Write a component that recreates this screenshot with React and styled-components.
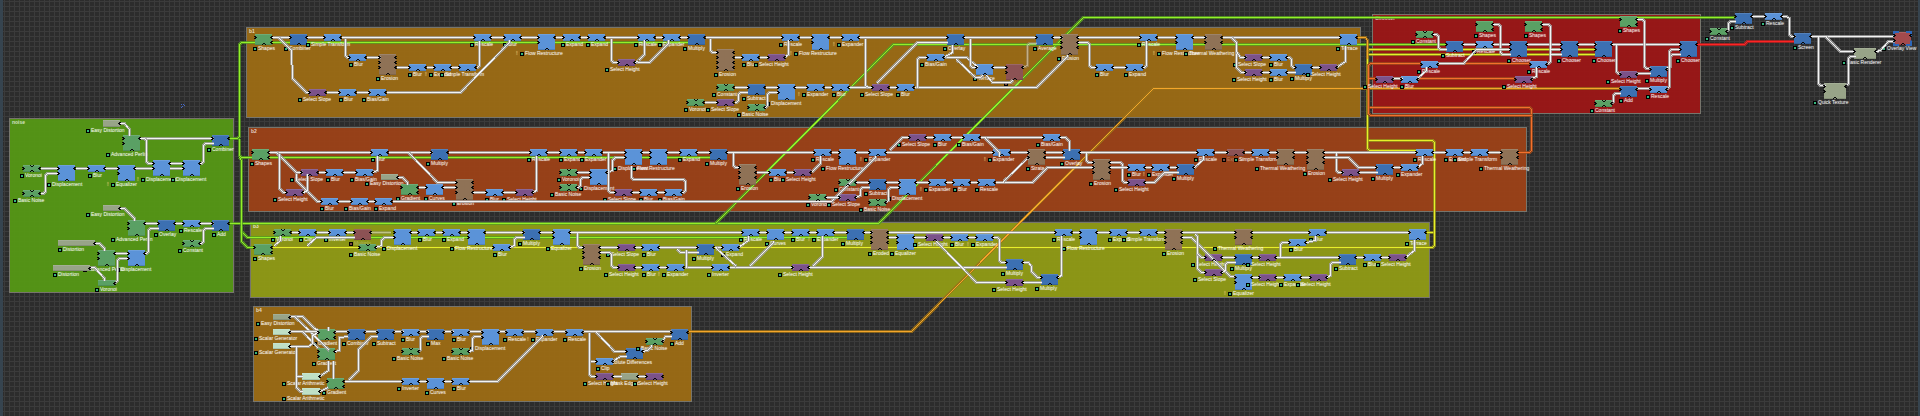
import React from 'react';
import styled, { createGlobalStyle } from 'styled-components';

const GlobalStyle = createGlobalStyle`
  body { margin: 0; background: #2c2c2c; }
`;

// One screen pixel shows three graph units at this zoom level.
const UNITS = 3;
const toPx = (origin, v) => origin + Math.round(v / UNITS);
const toLine = (origin, v) => origin + Math.floor(v / UNITS) + 0.5;

const KINDS = {
  G: '#5aa064',
  B: '#5b93d8',
  D: '#3c70b2',
  W: '#8f7256',
  P: '#7b528a',
  Y: '#98a488',
  M: '#bfe0c6',
  R: '#8c5254',
  V: '#a44a4c',
};

const Canvas = styled.main`
  position: relative;
  min-height: 100vh;
  overflow: hidden;
  background-color: #2c2c2c;
  background-image:
    linear-gradient(to right, #3b3b3b 1px, transparent 1px),
    linear-gradient(to bottom, #3b3b3b 1px, transparent 1px);
  background-size: 5px 5px;
  background-position: 4px 1px;
  font-family: 'Liberation Sans', Arial, sans-serif;
`;

const EdgeRail = styled.div`
  position: absolute;
  top: 0;
  bottom: 0;
  width: ${(p) => (p.$side === 'left' ? 3 : 2)}px;
  ${(p) => p.$side}: 0;
  background: #36444f;
`;

const Frame = styled.section`
  position: absolute;
  box-sizing: border-box;
  left: ${(p) => p.$x}px;
  top: ${(p) => p.$y}px;
  width: ${(p) => p.$w}px;
  height: ${(p) => p.$h}px;
  background: ${(p) => p.$fill};
  border: 1px solid #77756c;
`;

const FrameTitle = styled.h2`
  margin: 1px 2px;
  font-size: 5px;
  line-height: 5px;
  font-weight: 700;
  color: rgba(255, 255, 255, 0.75);
`;

const Wires = styled.svg`
  position: absolute;
  left: 0;
  top: 0;
  width: 100%;
  height: 100%;
  overflow: visible;
  pointer-events: none;
  fill: none;
`;

const NodeBox = styled.div`
  position: absolute;
  left: ${(p) => p.$x}px;
  top: ${(p) => p.$y}px;
  width: ${(p) => p.$w}px;
  height: ${(p) => p.$h}px;
  background: ${(p) => p.$fill};
  box-shadow: inset 0 1px rgba(255, 255, 255, 0.12), inset 0 -1px rgba(0, 0, 0, 0.12);
  ${(p) => p.$selected && 'outline: 2px dashed #2c66b8; outline-offset: -1px;'}
`;

const NodeLabel = styled.span`
  position: absolute;
  left: ${(p) => p.$x}px;
  top: ${(p) => p.$y}px;
  display: flex;
  align-items: center;
  gap: 1px;
  font-size: 5px;
  line-height: 5px;
  white-space: nowrap;
  color: rgba(255, 255, 255, ${(p) => (p.$muted ? 0.25 : 0.85)});
  text-shadow: 0 0 1px rgba(255, 255, 255, ${(p) => (p.$muted ? 0.1 : 0.5)});
`;

const Marker = styled.i`
  box-sizing: border-box;
  width: 4px;
  height: 4px;
  border: 1px solid #000;
  background: ${(p) => (p.$muted ? '#7c4a40' : '#35b57c')};
`;

const Warning = styled.b`
  position: absolute;
  left: -4px;
  color: rgba(240, 190, 60, 0.6);
`;

const FRAMES = [
  { title: 'noise', x: 9, y: 118, w: 225, h: 175, fill: 'rgba(88, 157, 20, .9)' },
  { title: 'b1', x: 246, y: 27, w: 1115, h: 91, fill: 'rgba(162, 111, 19, .9)' },
  { title: 'b2', x: 248, y: 127, w: 1279, h: 85, fill: 'rgba(162, 67, 22, .9)' },
  { title: 'b3', x: 250, y: 222, w: 1180, h: 76, fill: 'rgba(150, 161, 20, .9)' },
  { title: 'b4', x: 253, y: 306, w: 439, h: 96, fill: 'rgba(162, 111, 19, .9)' },
  { title: 'Chooser', x: 1372, y: 14, w: 329, h: 100, fill: 'rgba(162, 21, 21, .9)' },
];

// Links that cross between frames, in screen pixels.
const GREEN = ['#93f028', '#589c20'];
const LIME = ['#e6f02a', '#98961a'];
const AMBER = ['#f5a62a', '#9c7018'];
const ORANGE = ['#f4702c', '#a04c1c'];
const RED = ['#ff2424', '#c02020'];
const TRUNKS = [
  [GREEN, '229,138 239,138 239,42 690,42'],
  [GREEN, '239,138 239,157 710,157'],
  [GREEN, '229,223 878,223 1083,17 1737,17'],
  [GREEN, '715,223 893,44 1447,44'],
  [GREEN, '239,157 241,160 241,231 247,237 848,237'],
  [GREEN, '241,225 241,241 247,247 255,247'],
  [LIME, '1426,232 1434,232'],
  [LIME, '272,247 1434,247 1434,140 1367,140'],
  [LIME, '1596,49 1367,49 1367,150 1418,150'],
  [LIME, '1367,54 1596,54'],
  [AMBER, '1357,37 1365,37 1367,40 1367,58'],
  [AMBER, '688,331 911,331 1153,88 1621,88'],
  [ORANGE, '1517,152 1531,152 1531,107 1368,107'],
  [ORANGE, '1531,63 1368,63 1368,115 1531,115'],
  [ORANGE, '1368,78 1516,78'],
  [RED, '1696,44 1744,44 1747,41 1795,41'],
];

/*
 * Each sheet holds its screen origin and, in graph units, its
 *   nodes: kind x y width height marker-x label ("!" flags a warning, "~" a bypass)
 *   wires: "x,y x,y ..." polylines, or "@y a-b a-b" for straight runs on a row
 */
const SHEETS = [
  {
    ox: 0, oy: 100,
    nodes: `
Y 309 60 50 20 259 Easy Distortion
G 369 105 51 49 318 Advanced Perlin
D 636 105 52 34 622 Combiner
G 69 195 52 20 60 Voronoi
B 174 195 52 49 140 Displacement
B 264 195 52 20 264 Blur
B 354 195 52 49 333 !Equalizer
B 459 180 52 49 423 !Displacement
B 549 180 52 49 513 Displacement
G 69 270 52 20 40 Basic Noise
Y 309 315 50 19 259 Easy Distortion
G 383 360 52 49 333 Advanced Perlin
D 474 360 52 34 463 Overlay
B 548 360 52 20 537 Rescale
D 636 360 52 34 636 Add
G 549 420 52 20 533 Constant
Y 174 420 112 18 174 Distortion
G 294 450 51 49 249 Advanced Perlin
B 384 450 52 49 348 Displacement
Y 159 495 112 19 159 Distortion
G 294 540 51 19 285 Voronoi`,
    wires: `
357,71 372,71 388,88 388,106
@116 417-640
430,116 440,116 440,190 461,190
@206 120-176 225-266 314-356 404-461 508-551
@190 508-551
120,280 137,280 137,220 176,220
598,190 611,190 611,131 640,131
357,324 373,324 404,355 404,362
@370 432-476 524-550 598-640
598,430 611,430 611,385 640,385
284,430 298,430 314,446 314,452
@460 343-386
434,460 446,460 446,385 476,385
268,503 282,503 314,536 314,542
343,548 353,548 353,475 386,475`,
  },
  {
    ox: 240, oy: 20,
    nodes: `
G 45 42 51 34 39 Shapes
D 150 42 51 34 132 Combiner
B 252 42 52 20 198 Simple Transform
B 702 42 52 20 690 Rescale
B 792 42 52 20 789 Blur
B 895 42 52 49 840 !Flow Restructure
B 970 42 52 20 963 Expand
B 1045 42 52 20 1038 Expand
B 327 102 52 20 327 Blur
W 418 102 52 64 408 Erosion
B 507 132 52 20 505 Blur
B 582 132 52 20 567 !Expand
B 657 132 52 20 601 Simple Transform
P 208 207 52 20 174 Select Slope
B 298 207 52 20 297 Blur
B 388 207 52 20 366 Bias/Gain
P 1135 117 52 20 1095 Select Height`,
    wires: `
@52 95-152 200-254 305-704 752-794 842-897 945-972 1022-1047 1097-1196
115,52 155,92 157,176 198,216 209,216
317,56 317,112 329,112
@112 378-420
@142 468-509 558-584 632-659
708,142 718,142 718,60
@216 259-300 348-390
438,216 660,216 808,68 808,58
1115,54 1115,127 1137,127`,
  },
  {
    ox: 620, oy: 20,
    nodes: `
B 55 42 52 20 43 Rescale
B 130 42 52 20 114 Expander
D 204 42 51 34 189 Multiply
W 292 87 52 66 282 Erosion
B 367 102 52 20 366 Blur
P 443 102 52 20 402 Select Height
B 487 42 52 20 477 Rescale
B 577 42 51 49 522 !Flow Restructure
B 667 42 52 20 651 !Expander
D 980 42 51 34 969 Overlay
B 920 102 52 20 900 Bias/Gain
B 1068 132 52 34 1059 Terrace
G 292 192 52 20 277 Constant
G 202 237 52 20 192 Voronoi
P 292 237 52 20 258 Select Slope
D 383 192 52 34 367 Subtract
G 383 252 52 20 352 Basic Noise
B 473 192 52 49 438 Displacement
B 562 192 52 20 546 !Expander
B 635 192 52 20 635 Blur
P 757 192 52 20 720 Select Slope
B 832 192 52 20 828 Blur`,
    wires: `
@52 105-131 178-206 255-488 538-578 627-668 716-980 1030-1250
45,127 88,127 146,70 146,58
45,127 55,122 73,104 73,58
272,54 272,97 293,97
@112 343-368 418-443
494,112 505,104 505,58
@202 343-383 435-473 524-563 612-638 686-758 808-833
@246 253-293
343,246 355,246 355,217 383,217
434,262 443,262 443,217 473,217
882,202 1250,202 1342,110 1342,104
736,54 736,195 745,202
893,202 893,112 920,112
768,190 892,68 982,68
970,112 1040,112 1075,142
970,112 997,98 997,74
1052,54 1052,142 1070,142
@142 1118-1160
1010,117 1065,172 1088,172 1088,164
1100,165 1118,187 1177,187 1177,177`,
  },
  {
    ox: 1000, oy: 5,
    nodes: `
R 18 178 52 49 13 ~Fold
D 108 88 51 34 99 Average
W 184 88 51 64 172 Erosion
B 288 178 52 20 286 Blur
B 378 178 52 20 372 Expand
B 421 88 52 20 411 Rescale
B 527 88 52 49 471 !Flow Restructure
W 616 88 52 49 552 Thermal Weathering
P 736 148 52 20 700 Select Slope
B 810 148 52 20 808 Blur
P 736 193 52 20 696 Select Height
B 810 193 52 20 808 Blur
D 885 178 51 34 870 Multiply
P 960 178 52 20 919 Select Height
B 1020 88 51 34 1008 Terrace`,
    wires: `
~68,187 83,182 83,114 110,114
@97 157-186 232-423 472-529 577-618 668-1022
232,112 268,112 268,187 288,187
@187 337-380 933-962
428,187 438,187 438,106
695,97 709,112 709,187 724,202 738,202
709,140 722,157 738,157
@157 785-812
@202 785-812 860-887
860,157 873,157 873,187 887,187
1010,187 1037,170 1037,120`,
  },
  {
    ox: 1360, oy: 5,
    nodes: `
G 168 78 52 20 152 Constant
G 348 48 52 34 342 Shapes
G 496 48 52 34 492 Shapes
G 780 33 52 34 774 Shapes
D 258 108 51 34 243 Subtract
B 348 108 52 20 336 Rescale
D 450 108 51 49 442 Chooser
D 602 108 51 49 591 Chooser
D 706 108 51 49 696 Chooser
D 960 108 51 49 948 Chooser
B 183 168 52 20 172 Rescale
B 510 168 52 20 501 Rescale
P 48 213 52 20 9 Select Height
B 124 213 52 20 121 Blur
P 466 213 52 20 426 Select Height
P 780 198 52 20 739 Select Height
D 870 183 51 34 855 Multiply
D 780 243 51 34 778 Add
B 870 243 52 20 859 Rescale
G 705 286 52 20 690 Constant`,
    wires: `
217,88 235,88 235,132 260,132
@117 307-350 397-452 500-604 652-708 755-962
397,58 421,58 421,148 452,148
232,175 311,175 350,133 452,133
545,58 571,58 571,175 560,175
@132 571-604
@148 571-604
770,118 770,205 782,205
@205 830-872
828,43 853,43 853,190 872,190
918,190 932,185 932,148 962,148
918,250 929,250 929,133 962,133
@250 830-872
753,295 761,295 761,265 782,265
@220 98-126
172,220 200,195 200,183
515,220 529,215 529,183`,
  },
  {
    ox: 1690, oy: 5,
    nodes: `
D 135 24 52 34 120 Subtract
B 225 24 52 20 213 Rescale
G 60 69 52 20 45 Constant
D 313 84 52 34 309 Screen
Y 493 129 67 34 456 Basic Renderer
Y 403 234 67 49 370 Quick Texture
V 612 80 52 40 577 Overlay View`,
    wires: `
108,78 115,78 115,49 137,49
@34 183-227
275,34 290,34 297,41 297,93 315,93
@93 362-610
385,95 385,240 405,240
410,97 452,139 495,139
468,240 474,236 474,153 495,153
558,139 570,135 596,108 612,108`,
  },
  {
    ox: 240, oy: 120,
    nodes: `
G 36 88 51 34 30 Shapes
P 184 148 52 20 150 Select Slope
B 258 148 52 20 258 Blur
B 348 148 52 20 330 Bias/Gain
P 138 207 52 20 100 Select Height
B 244 234 52 20 240 Blur
B 334 234 52 20 312 Bias/Gain
B 406 234 52 20 402 Expand
B 394 88 52 20 393 Blur
Y 423 162 50 18 375 Easy Distortion
G 484 192 52 34 468 Gradient
B 558 192 52 34 553 Curves
W 648 177 52 64 637 Erosion
D 574 88 51 34 558 Multiply
B 738 207 52 20 736 Blur
P 828 207 52 20 787 Select Height
B 871 88 52 20 861 Rescale
B 961 88 52 20 957 Expand
B 1036 88 52 20 1020 Expander
G 960 148 52 20 951 Voronoi
G 960 192 52 20 931 Basic Noise
B 1050 148 52 49 1016 Displacement
P 1125 207 52 20 1090 Select Slope
B 1200 207 52 20 1198 Blur
B 1275 207 52 20 1254 Bias/Gain
B 1155 88 52 49 1120 Displacement
B 1230 88 52 49 1176 Flow Restructure
G 103 328 52 20 93 Voronoi
B 178 328 52 20 178 Clip
B 268 328 52 20 252 Inverter
R 342 328 51 34 327 ~Multiply
G 357 372 52 20 327 Basic Noise
G 42 373 53 34 39 Shapes
B 462 328 52 49 426 Displacement
B 535 328 52 20 534 Blur
B 610 328 52 20 606 Expand
B 685 328 52 49 630 Flow Restructure
B 759 372 52 20 759 Blur
D 850 328 51 34 834 Multiply
B 940 328 51 49 918 Equalizer
W 1030 373 50 64 1017 Erosion
P 1134 372 52 20 1098 Select Slope
B 1206 372 52 20 1206 Blur
P 1134 432 52 20 1093 Select Height
B 1206 432 52 20 1206 Blur
B 1282 432 52 20 1267 !Expander`,
    wires: `
@97 86-396 444-576 624-873 920-963 1012-1038 1086-1157 1205-1232 1280-1322
108,97 168,157 186,157
118,100 118,205 130,216 140,216
168,160 168,180 232,243 246,243
190,216 203,210 203,160
@157 234-260 308-350 1008-1052
398,157 412,150 412,105
@243 292-336 382-408
458,243 1775,243 1905,113 1905,105
505,97 592,187 650,187
472,171 488,171 503,186 503,193
@202 535-560 608-650
@216 697-740 788-830 1175-1202 1250-1277
878,216 890,210 890,105
1008,202 1022,202 1022,172 1052,172
1100,157 1117,150 1117,120 1125,112 1157,112
1105,98 1105,216 1127,216
1175,135 1175,178 1335,178 1335,216 1325,216
103,377 121,360 121,345
@337 153-180 228-270 317-344 512-537 586-612 660-687 736-852 898-942 988-1508
203,377 228,352 344,352
~392,337 450,337
407,382 425,375 425,360 433,352 464,352
808,382 823,375 823,352 852,352
1011,338 1011,382 1032,382
@382 1078-1136 1183-1208 1256-1374
1078,397 1115,397 1115,441 1136,441
@441 1183-1208 1256-1284`,
  },
  {
    ox: 670, oy: 120,
    nodes: `
B 30 88 52 20 24 Expand
D 120 88 51 34 105 Multiply
W 208 132 52 64 198 Erosion
B 298 147 52 20 297 Blur
P 373 147 52 20 333 Select Height
B 433 88 52 20 423 Rescale
B 508 88 51 49 453 Flow Restructure
B 597 88 52 20 582 !Expander
P 717 42 52 20 681 Select Slope
B 792 42 52 20 789 Blur
B 880 42 52 20 861 Bias/Gain
B 1120 42 52 20 1099 Bias/Gain
B 970 88 52 20 955 !Expander
W 1075 88 52 49 1068 Strata
D 1180 88 51 34 1170 Overlay
W 1270 118 52 64 1258 Erosion
G 508 177 52 20 492 Constant
D 597 177 52 34 582 Subtract
B 688 177 52 49 651 Displacement
G 417 222 52 20 408 Voronoi
P 508 222 52 20 472 Select Slope
G 597 237 52 20 567 Basic Noise
B 778 177 52 20 762 !Expander
B 850 177 52 20 849 Blur
B 925 177 52 20 915 Rescale
B 217 328 52 20 207 Rescale
B 292 328 51 34 285 Curves
B 366 328 52 20 363 Blur
B 441 328 52 20 426 !Expander
D 530 328 52 34 513 Multiply
W 604 328 52 64 594 Eroded
B 680 343 52 49 660 Equalizer
P 769 343 52 20 729 Select Height
B 843 343 52 20 841 Blur
B 918 343 52 20 903 !Expander
D 82 373 52 34 66 Multiply
B 157 373 52 20 152 Expand
B 127 432 52 20 111 Inverter
P 367 432 52 20 325 Select Height
D 1008 418 51 34 993 Multiply
P 1008 477 52 20 967 Select Height
D 1113 462 51 34 1096 Multiply
B 1156 328 52 20 1146 Rescale
B 1230 328 52 49 1176 Flow Restructure`,
    wires: `
@97 80-122 168-435 483-510 557-599 645-972 1020-1077 1127-1182 1228-1583
190,98 190,142 210,142
@157 258-300 348-375
423,157 451,130 451,105
657,92 697,52 719,52
@52 765-794 842-882 930-1122
945,54 988,97 988,108
1168,52 1185,52 1198,65 1198,90
@112 1127-1182
1250,98 1250,127 1272,127
@187 556-599 645-690 737-780 827-852 900-927
@231 467-510
556,231 572,225 572,202 599,202
645,247 655,240 655,202 690,202
975,187 1088,187 1132,142 1272,142
1000,183 1077,108
@337 265-294 340-368 415-443 490-532 580-606 655-1158 1206-1232 1280-1322
@352 655-682 728-771 817-845 892-920
967,352 988,352 988,427 1010,427
22,387 32,397 84,397
@441 43-129 177-369 415-1010
50,441 50,388
@382 132-159
205,382 235,360 235,345
140,385 198,440
237,438 310,366 310,360
428,438 458,408 458,345
800,365 918,487 1010,487
@487 1057-1115
1057,427 1075,427 1085,440 1085,455 1103,471 1115,471
1162,471 1174,465 1174,345`,
  },
  {
    ox: 1100, oy: 120,
    nodes: `
B 84 132 52 20 81 Blur
B 157 132 52 20 141 !Expander
D 232 132 52 34 216 Multiply
P 84 177 52 20 43 Select Height
B 292 88 52 20 282 Rescale
R 382 88 52 20 366 ~Expand
B 457 88 52 20 402 Simple Transform
W 532 88 50 49 466 Thermal Weathering
W 621 88 50 64 610 Erosion
P 727 148 52 20 685 Select Height
D 829 132 51 34 814 Multiply
B 904 132 52 20 889 Expander
B 949 88 52 20 939 Rescale
B 1038 88 52 20 1033 Expand
B 1113 88 52 20 1059 Simple Transform
W 1202 88 51 49 1137 Thermal Weathering
B 30 328 52 20 25 Expand
B 120 328 52 20 66 Simple Transform
W 195 328 51 64 186 Erosion
W 405 328 51 49 339 Thermal Weathering
B 628 328 52 20 627 Blur
B 568 358 52 20 567 Blur
B 928 328 51 34 916 Terrace
P 315 402 52 20 274 Select Height
D 405 402 51 34 390 Multiply
P 478 402 52 20 438 Select Height
P 315 447 52 20 279 Select Slope
B 405 462 51 49 384 !Equalizer
P 478 462 52 20 438 Select Height
B 552 462 52 20 538 Expander
P 630 462 52 20 588 Select Height
D 718 402 52 34 702 Subtract
B 792 402 52 20 789 Blur
P 867 402 52 20 828 Select Height`,
    wires: `
28,127 68,127 68,187 86,187
@142 28-86 132-159 208-234 878-906
132,187 162,187 192,157 234,157
283,142 311,118 311,105
@97 343-384 433-459 506-534 580-623 669-951 998-1040 1088-1115 1162-1204
709,97 709,157 729,157
669,112 745,112 775,142 831,142
@157 775-831
953,142 967,130 967,105
@337 80-122 170-197 243-407 453-630 678-930
243,352 275,352 392,470 407,470
285,343 292,350 292,445 305,456 317,456
292,400 305,412 317,412
@412 363-407 453-480 526-720 766-794 840-869
363,456 376,450 376,427 407,427
541,410 541,367 570,367
618,367 646,360 646,345
@471 453-480 526-554 600-632
678,471 691,465 691,427 720,427
915,412 943,390 943,358`,
  },
  {
    ox: 240, oy: 300,
    nodes: `
Y 99 42 50 18 48 Easy Distortion
M 99 87 50 18 43 Scalar Generator
M 99 130 50 19 43 Scalar Generator
G 233 87 52 34 218 Gradient
G 233 144 52 36 217 Gradient
M 186 219 53 20 127 Scalar Arithmetic
M 186 264 53 20 127 Scalar Arithmetic
G 262 234 52 34 247 Gradient
D 323 87 52 34 307 Combiner
D 411 87 51 34 397 Subtract
B 487 87 52 20 484 Blur
G 487 144 52 20 457 Basic Noise
D 562 87 51 34 559 Max
B 637 87 52 20 635 Blur
G 637 144 52 20 607 Basic Noise
B 726 87 51 49 690 Displacement
B 798 87 52 20 789 Rescale
B 888 87 52 20 873 !Expander
B 978 87 52 20 969 Rescale
D 1293 87 51 34 1290 Add
B 487 234 52 20 471 Inverter
B 562 234 51 34 555 Curves
B 637 234 52 20 635 Blur
D 1158 144 51 34 1083 Absolute Differences
B 1068 174 52 20 1067 Clip
G 1218 114 52 20 1188 Basic Noise
P 1068 219 52 20 1029 Select Height
Y 1143 219 52 20 1098 Mask Edges
P 1218 219 52 20 1178 Select Height`,
    wires: `
147,50 186,50 222,86 235,90
162,50 267,150
@95 147-235 283-325 373-413 460-489 535-564 610-639 686-728 775-800 848-890 938-980 1028-1295
186,95 235,146
147,140 205,140 216,130 216,105 235,97
169,140 169,262 180,274 188,274
@229 169-188 1117-1145 1192-1220
238,229 265,210 265,180
238,274 264,262
281,180 281,236
265,78 265,92
283,153 298,150 298,112 325,110
@243 312-489 535-564 610-639
325,240 355,210 355,148 393,110 413,110
535,155 542,155 542,110 564,110
686,155 696,150 696,110 728,110
686,243 773,243 908,110 908,103
1049,96 1049,229 1070,229
@185 1050-1070
1068,97 1122,154 1160,154
1117,185 1140,170 1160,170
1207,154 1222,150 1235,140 1235,132
1268,124 1275,110 1295,110`,
  },
];

const CHAMFER = 2;

// Cuts right-angled corners; slanted joints stay sharp.
function toPath(points) {
  let d = `M${points[0].join(' ')}`;
  for (let i = 1; i < points.length - 1; i += 1) {
    const [ax, ay] = points[i - 1];
    const [bx, by] = points[i];
    const [cx, cy] = points[i + 1];
    const square = (ax === bx && by === cy) || (ay === by && bx === cx);
    if (square) {
      d += `L${bx + Math.sign(ax - bx) * CHAMFER} ${by + Math.sign(ay - by) * CHAMFER}`;
      d += `L${bx + Math.sign(cx - bx) * CHAMFER} ${by + Math.sign(cy - by) * CHAMFER}`;
    } else {
      d += `L${bx} ${by}`;
    }
  }
  return `${d}L${points[points.length - 1].join(' ')}`;
}

const readPoints = (text, px, py) =>
  text.split(' ').map((pair) => {
    const [x, y] = pair.split(',').map(Number);
    return [px(x), py(y)];
  });

const trunks = TRUNKS.map(([colors, text]) => ({
  colors,
  d: toPath(readPoints(text, (v) => v + 0.5, (v) => v + 0.5)),
}));

const nodes = SHEETS.flatMap(({ ox, oy, nodes: text }) =>
  text.trim().split('\n').map((line) => {
    const [kind, x, y, w, h, mark, ...words] = line.split(' ');
    const raw = words.join(' ');
    const top = toPx(oy, +y);
    const height = Math.round(+h / UNITS);
    return {
      kind,
      x: toPx(ox, +x),
      y: top,
      w: Math.round(+w / UNITS),
      h: height,
      labelX: toPx(ox, +mark),
      labelY: top + height + 1,
      warn: raw[0] === '!',
      muted: raw[0] === '~',
      label: raw.replace(/^[!~]/, ''),
    };
  }),
);

const wires = SHEETS.flatMap(({ ox, oy, wires: text }) =>
  text.trim().split('\n').flatMap((line) => {
    const px = (v) => toLine(ox, v);
    const py = (v) => toLine(oy, v);
    if (line[0] === '@') {
      const [row, ...runs] = line.slice(1).split(' ');
      return runs.map((run) => {
        const [a, b] = run.split('-').map(Number);
        return { d: `M${px(a)} ${py(+row)}H${px(b)}`, dim: false };
      });
    }
    const dim = line[0] === '~';
    return [{ d: toPath(readPoints(dim ? line.slice(1) : line, px, py)), dim }];
  }),
);

function Ports({ node }) {
  const { kind, x, y, w, h } = node;
  const inputs = kind === 'M' || (kind === 'Y' && h < 8) ? 0 : Math.floor((h - 2) / 5);
  const outputs = kind === 'W' ? inputs : kind === 'G' && h === 11 ? 2 : 1;
  const left = Array.from({ length: inputs }, (_, i) => y + 2 + i * 5);
  const right = Array.from({ length: outputs }, (_, i) => y + 2 + i * 5);
  const socket = Math.round(x + w / 2 - 1);
  return (
    <g>
      {left.map((t) => (
        <path key={`l${t}`} d={`M${x - 1} ${t}h2v1h1v1h-1v1h-2v-1h1v-1h-1z`} fill="#080808" />
      ))}
      {right.map((t) => (
        <path key={`r${t}`} d={`M${x + w + 1} ${t}h-2v1h-1v1h1v1h2v-1h-1v-1h1z`} fill="#080808" />
      ))}
      {inputs > 0 && (
        <path d={`M${socket - 1} ${y + h}v-1h1v-1h2v1h1v1h-1v-1h-2v1z`} fill="#080808" />
      )}
      {inputs > 0 && h < 8 && kind === 'G' && (
        <path d={`M${socket - 1} ${y}v1h1v1h2v-1h1v-1h-1v1h-2v-1z`} fill="#080808" />
      )}
    </g>
  );
}

function GraphNode({ node }) {
  return (
    <>
      <NodeBox
        $x={node.x}
        $y={node.y}
        $w={node.w}
        $h={node.h}
        $fill={KINDS[node.kind]}
        $selected={node.kind === 'V'}
      />
      <NodeLabel $x={node.labelX} $y={node.labelY} $muted={node.muted}>
        {node.warn && <Warning>!</Warning>}
        <Marker $muted={node.muted} />
        {node.label}
      </NodeLabel>
    </>
  );
}

export default function App() {
  return (
    <>
      <GlobalStyle />
      <Canvas>
        {FRAMES.map((f) => (
          <Frame key={f.title} $x={f.x} $y={f.y} $w={f.w} $h={f.h} $fill={f.fill}>
            <FrameTitle>{f.title}</FrameTitle>
          </Frame>
        ))}
        <Wires aria-hidden="true">
          {trunks.map((t, i) => (
            <g key={i} shapeRendering="crispEdges">
              <path d={t.d} stroke={t.colors[1]} strokeWidth="3" strokeOpacity="0.8" />
              <path d={t.d} stroke={t.colors[0]} strokeWidth="1" />
            </g>
          ))}
          <path d="M181 104h1v1h-1zM183 104h1v1h-1zM182 106h1v1h-1zM184 105h1v1h-1zM181 107h1v1h-1z" fill="#4468c8" />
        </Wires>
        {nodes.map((n, i) => (
          <GraphNode key={i} node={n} />
        ))}
        <Wires aria-hidden="true">
          {wires.map((w, i) => (
            <g key={i} shapeRendering="crispEdges" opacity={w.dim ? 0.5 : 1}>
              <path d={w.d} stroke="#a3a3a3" strokeWidth="3" strokeOpacity="0.8" />
              <path d={w.d} stroke="#f4f4f4" strokeWidth="1" />
            </g>
          ))}
          {nodes.map((n, i) => (
            <Ports key={i} node={n} />
          ))}
        </Wires>
        <EdgeRail $side="left" />
        <EdgeRail $side="right" />
      </Canvas>
    </>
  );
}
